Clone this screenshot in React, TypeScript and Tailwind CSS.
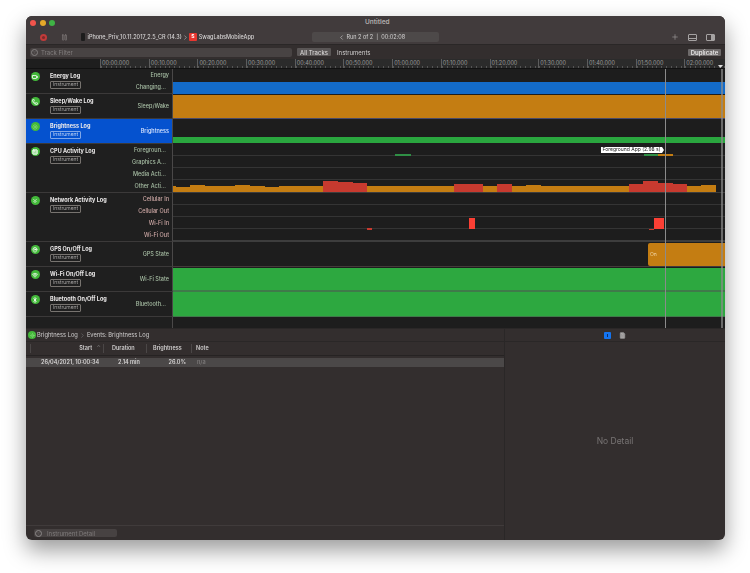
import { Battery, Phone, Sun, Cpu, ChevronsDown, MapPin, Wifi, Bluetooth, Plus, Pause, ChevronLeft, ChevronRight, Filter, FileText } from 'lucide-react'

const tracks = [
  { name: 'Energy Log', icon: Battery, labels: ['Energy', 'Changing...'], h: 'h-[25px]', tone: 'text-[#a8bfa5]' },
  { name: 'Sleep/Wake Log', icon: Phone, labels: ['Sleep/Wake'], h: 'h-[25px]', tone: 'text-[#a8bfa5]' },
  { name: 'Brightness Log', icon: Sun, labels: ['Brightness'], h: 'h-[25px]', tone: 'text-[#dbe6ff]', selected: true },
  { name: 'CPU Activity Log', icon: Cpu, labels: ['Foregroun...', 'Graphics A...', 'Media Acti...', 'Other Acti...'], h: 'h-[49px]', tone: 'text-[#a8bfa5]' },
  { name: 'Network Activity Log', icon: ChevronsDown, labels: ['Cellular In', 'Cellular Out', 'Wi-Fi In', 'Wi-Fi Out'], h: 'h-[49px]', tone: 'text-[#d0aaa7]' },
  { name: 'GPS On/Off Log', icon: MapPin, labels: ['GPS State'], h: 'h-[25px]', tone: 'text-[#a8bfa5]' },
  { name: 'Wi-Fi On/Off Log', icon: Wifi, labels: ['Wi-Fi State'], h: 'h-[25px]', tone: 'text-[#a8bfa5]' },
  { name: 'Bluetooth On/Off Log', icon: Bluetooth, labels: ['Bluetooth...'], h: 'h-[25px]', tone: 'text-[#a8bfa5]' },
]

const times = ['00:00.000', '00:10.000', '00:20.000', '00:30.000', '00:40.000', '00:50.000', '01:00.000', '01:10.000', '01:20.000', '01:30.000', '01:40.000', '01:50.000', '02:00.000']

// width and height in px, laid end to end from the chart's left edge (x=172)
const cpuBars = [
  { x: 0, w: 3, h: 6, c: '#c47d12' }, { x: 3, w: 14, h: 5, c: '#c47d12' }, { x: 17, w: 15, h: 7, c: '#c47d12' },
  { x: 32, w: 30, h: 6, c: '#c47d12' }, { x: 62, w: 15, h: 7, c: '#c47d12' }, { x: 77, w: 15, h: 6, c: '#c47d12' },
  { x: 92, w: 14, h: 5, c: '#c47d12' }, { x: 106, w: 43.5, h: 6, c: '#c47d12' },
  { x: 150, w: 15, h: 11, c: '#c73a2f' }, { x: 165, w: 15, h: 10, c: '#c73a2f' }, { x: 180, w: 14.5, h: 9, c: '#c73a2f' },
  { x: 194, w: 87, h: 6, c: '#c47d12' }, { x: 281, w: 29, h: 8, c: '#c73a2f' }, { x: 310, w: 14, h: 6, c: '#c47d12' },
  { x: 325, w: 15, h: 8, c: '#c73a2f' }, { x: 340, w: 14, h: 6, c: '#c47d12' }, { x: 354, w: 15, h: 7, c: '#c47d12' },
  { x: 369, w: 88, h: 6, c: '#c47d12' }, { x: 457, w: 14, h: 8, c: '#c73a2f' }, { x: 471, w: 15, h: 11, c: '#c73a2f' },
  { x: 486, w: 15, h: 9, c: '#c73a2f' }, { x: 501, w: 14, h: 8, c: '#c73a2f' }, { x: 515, w: 14, h: 6, c: '#c47d12' },
  { x: 529, w: 15, h: 7, c: '#c47d12' },
]

function Badge({ selected }: { selected?: boolean }) {
  return (
    <div className={`mt-[1px] flex h-[8px] w-[31px] items-center justify-center rounded-[1px] border text-[5px] leading-none ${selected ? 'border-[#7fa6e8] text-[#bcd2f5]' : 'border-[#77736f] text-[#a5a3a2]'}`}>
      Instrument
    </div>
  )
}

function TrackHeader({ track }: { track: (typeof tracks)[number] }) {
  const Icon = track.icon
  return (
    <div className={`${track.h} flex w-[147px] shrink-0 border-r border-b border-r-[#4a4848] border-b-[#3b3939] ${track.selected ? 'bg-[#0552cf]' : 'bg-[#1f1f1f]'}`}>
      <div className="w-[24px] shrink-0 pt-[3px] pl-[4.5px]">
        <div className="flex h-[9px] w-[9px] items-center justify-center rounded-full bg-[#43b93a]">
          <Icon size={6} strokeWidth={3} className={track.selected ? 'text-[#86d97a]' : 'text-white'} />
        </div>
      </div>
      <div className="w-[62px] shrink-0 pt-[3.5px]">
        <div className="text-[5.5px] leading-[7px] font-bold whitespace-nowrap text-[#eceaea]">{track.name}</div>
        <Badge selected={track.selected} />
      </div>
      <div className={`flex flex-1 flex-col items-end pr-[3px] text-[5.5px] font-medium whitespace-nowrap ${track.tone} ${track.labels.length === 1 ? 'justify-center' : 'justify-around'}`}>
        {track.labels.map((label) => (
          <span key={label} className={label.endsWith('...') ? 'mr-[3px]' : ''}>{label}</span>
        ))}
      </div>
    </div>
  )
}

function Lane() {
  return <div className="h-[12px] border-b border-[#343434]" />
}

function Chart() {
  return (
    <div className="relative flex-1 overflow-hidden bg-[#1d1d1d]">
      <div className="h-[25px] border-b border-[#343434] pt-[12.5px]">
        <div className="h-[12px] bg-[#136bc9]" />
      </div>
      <div className="h-[25px] border-b border-[#4a4a68] pt-[1px]">
        <div className="h-[23px] bg-[#c47d12]" />
      </div>
      <div className="h-[25px] pt-[18px]">
        <div className="h-[6px] bg-[#2aa63f]" />
      </div>

      <div className="relative h-[49px] border-b border-[#3d3d3d]">
        <Lane />
        <Lane />
        <Lane />
        <div className="absolute top-[10px] left-[222px] h-[1.5px] w-[16px] bg-[#2f8f45]" />
        <div className="absolute top-[10px] left-[471px] h-[1.5px] w-[15px] bg-[#2f8f45]" />
        <div className="absolute top-[10px] left-[485px] h-[2px] w-[15px] bg-[#c47d12]" />
        <div className="absolute top-[3px] left-[428px] flex h-[6px] w-[61px] items-center justify-center bg-white text-[5px] whitespace-nowrap text-[#222]">
          Foreground App (2.98 s)
        </div>
        <div className="absolute top-[3px] left-[489px] h-[6px] w-[2px] bg-white [clip-path:polygon(0_0,100%_50%,0_100%)]" />
        <div className="absolute right-0 bottom-0 left-0 flex items-end">
          {cpuBars.map((bar) => (
            <div key={bar.x} style={{ width: bar.w, height: bar.h, backgroundColor: bar.c }} />
          ))}
        </div>
      </div>

      <div className="relative h-[49px] border-b-2 border-[#3d3d3d]">
        <Lane />
        <Lane />
        <Lane />
        <div className="absolute top-[25px] left-[296px] h-[11px] w-[6px] bg-[#fb3f34]" />
        <div className="absolute top-[25px] left-[481px] h-[11px] w-[10px] bg-[#fb3f34]" />
        <div className="absolute top-[35px] left-[194px] h-[2px] w-[5px] bg-[#c73a2f]" />
        <div className="absolute top-[36px] left-[476px] h-[1px] w-[5px] bg-[#c73a2f]" />
      </div>

      <div className="flex h-[25px] justify-end border-b border-[#443a3a] pt-[1px]">
        <div className="h-[23px] w-[77px] rounded-l-[2px] bg-[#c47d12] pt-[8px] pl-[2px] text-[5px] leading-[7px] text-[#f3d8a8]">On</div>
      </div>
      <div className="h-[25px] border-b-2 border-[#3f7a4a] pt-[1px]">
        <div className="h-[22px] bg-[#2da840]" />
      </div>
      <div className="h-[25px] border-b border-[#3f7a4a]">
        <div className="h-[24px] bg-[#2da840]" />
      </div>

      <div className="absolute top-0 bottom-0 left-[492px] w-[1px] bg-[#8b8b8b]" />
      <div className="absolute top-0 bottom-0 left-[548px] w-[2px] bg-[#8b8b8b]/70" />
    </div>
  )
}

export default function App() {
  return (
    <div className="h-[573px] w-[750px] overflow-hidden bg-white pt-[16px] pl-[26px] font-['Inter','Liberation_Sans',sans-serif]">
      <div className="flex h-[524px] w-[699px] flex-col overflow-hidden rounded-[6px] bg-[#332e2e] shadow-[0_10px_22px_rgba(0,0,0,0.4)] blur-[0.3px]">
        {/* title bar */}
        <div className="h-[29px] shrink-0 border-b border-[#2a2727] bg-[#413b3c]">
          <div className="flex h-[14px] items-center gap-[3.5px] pl-[4px]">
            <span className="h-[6px] w-[6px] rounded-full bg-[#f2544c]" />
            <span className="h-[6px] w-[6px] rounded-full bg-[#e5a929]" />
            <span className="h-[6px] w-[6px] rounded-full bg-[#3fb345]" />
            <span className="flex-1 pr-[29px] text-center text-[6.5px] font-semibold text-[#b0acac]">Untitled</span>
          </div>
          <div className="flex h-[14px] items-center pr-[10px] text-[5.5px] text-[#d4d2d2]">
            <div className="ml-[14px] flex h-[7px] w-[7px] shrink-0 items-center justify-center rounded-full bg-[#c23b3a]">
              <span className="h-[3px] w-[3px] rounded-full bg-[#7a2b2b]" />
            </div>
            <Pause size={7} className="ml-[14px] shrink-0 text-[#8b8786]" />
            <div className="ml-[12.5px] h-[8px] w-[4px] shrink-0 rounded-[1px] bg-[#1c1c1c]" />
            <span className="ml-[3px] font-medium whitespace-nowrap">iPhone_Priv_10.11.2017_2.5_CR (14.3)</span>
            <ChevronRight size={7} className="shrink-0 text-[#c4c2c2]" />
            <div className="flex h-[8px] w-[8px] shrink-0 items-center justify-center rounded-[1px] bg-[#e8362f] text-[5px] font-bold text-white">S</div>
            <span className="ml-[2px] font-medium">SwagLabsMobileApp</span>
            <div className="ml-[58px] flex h-[10px] w-[127px] shrink-0 items-center justify-center gap-[1px] rounded-[2px] bg-[#4d4949] pr-[9px]">
              <ChevronLeft size={7} />
              <span className="ml-[1px] whitespace-nowrap">Run 2 of 2 &nbsp;|&nbsp; 00:02:08</span>
            </div>
            <Plus size={8} className="ml-auto shrink-0 text-[#9c9898]" />
            <div className="ml-[9px] h-[7px] w-[9px] shrink-0 rounded-[1px] border border-[#a5a2a2] pt-[3px]">
              <div className="h-[1px] bg-[#a5a2a2]" />
            </div>
            <div className="ml-[9px] flex h-[7px] w-[9px] shrink-0 justify-end rounded-[1px] border border-[#a5a2a2]">
              <div className="w-[3px] bg-[#a5a2a2]" />
            </div>
          </div>
        </div>

        {/* filter bar */}
        <div className="flex h-[14px] shrink-0 items-center bg-[#332e2e] text-[6px]">
          <div className="ml-[4px] flex h-[9px] w-[262px] items-center rounded-[2px] bg-[#484343] pl-[1px] text-[#837f7f]">
            <div className="flex h-[7px] w-[7px] items-center justify-center rounded-full border border-[#837f7f]">
              <Filter size={3} />
            </div>
            <span className="ml-[3px]">Track Filter</span>
          </div>
          <div className="ml-[5px] flex h-[8px] w-[34px] items-center justify-center rounded-[1px] bg-[#5a5656] text-[#e2e0e0]">All Tracks</div>
          <span className="ml-[6px] text-[#cfcdcd]">Instruments</span>
          <div className="mr-[4px] ml-auto flex h-[7px] w-[33px] items-center justify-center rounded-[1px] bg-[#6e6a6a] font-semibold text-[#e6e4e4]">Duplicate</div>
        </div>

        {/* ruler */}
        <div className="relative flex h-[10px] shrink-0 border-b border-[#111] bg-[#2b2b2b]">
          <div className="w-[74px] shrink-0 bg-[#1e1e1e]" />
          {times.map((t) => (
            <div key={t} className="flex w-[48.7px] shrink-0 flex-col justify-between border-l border-[#5d5d5d] text-[5.5px] leading-[6px] text-[#9a9a9a]">
              <span className="pt-[1px] pl-[1px]">{t}</span>
              <div className="h-[2px] bg-[repeating-linear-gradient(90deg,#555_0,#555_1px,transparent_1px,transparent_4.87px)]" />
            </div>
          ))}
          <div className="absolute right-[2px] bottom-0 h-[3px] w-[5px] bg-[#dddddd] [clip-path:polygon(0_0,100%_0,50%_100%)]" />
        </div>

        {/* tracks */}
        <div className="flex h-[259px] shrink-0 bg-[#1f1f1f]">
          <div className="flex w-[147px] shrink-0 flex-col">
            {tracks.map((track) => (
              <TrackHeader key={track.name} track={track} />
            ))}
            <div className="flex-1 border-r border-[#4a4848]" />
          </div>
          <Chart />
        </div>

        {/* detail area */}
        <div className="flex flex-1 border-t border-[#2a2727]">
          <div className="flex w-[479px] shrink-0 flex-col border-r border-[#2a2727]">
            <div className="flex h-[13px] shrink-0 items-center border-b border-[#2a2727] pl-[2px] text-[5.75px] text-[#cfcdcd]">
              <span className="flex h-[8px] w-[8px] items-center justify-center rounded-full bg-[#43b93a]">
                <Sun size={5} strokeWidth={3} className="text-[#86d97a]" />
              </span>
              <span className="ml-[1px]">Brightness Log</span>
              <ChevronRight size={7} className="mx-[1px] text-[#777]" />
              <span>Events: Brightness Log</span>
            </div>
            <div className="flex h-[14px] shrink-0 items-center border-b border-[#262323] pl-[4px] text-[5.5px] font-semibold text-[#cfcdcd]">
              <div className="w-[73px] border-l border-[#4b4747] pr-[2px] text-right">Start <span className="ml-[3px] text-[#777]">⌃</span></div>
              <div className="w-[43px] border-l border-[#4b4747] pl-[8px]">Duration</div>
              <div className="w-[45px] border-l border-[#4b4747] pl-[6px]">Brightness</div>
              <div className="border-l border-[#4b4747] pl-[4px]">Note</div>
            </div>
            <div className="mt-[2px] flex h-[9px] shrink-0 items-center bg-[#4b4848] text-[5.5px] font-semibold text-[#d8d6d6]">
              <div className="w-[92px] pl-[15px] whitespace-nowrap">26/04/2021, 10:00:34</div>
              <div className="w-[40px] whitespace-nowrap">2.14 min</div>
              <div className="w-[28px] text-right">26.0%</div>
              <div className="pl-[11px] text-[#7d7a7a]">n/a</div>
            </div>
            <div className="flex-1" />
            <div className="flex h-[15px] shrink-0 items-center border-t border-[#403b3b] pl-[8px]">
              <div className="flex h-[8px] w-[83px] items-center rounded-[2px] bg-[#474242] pl-[1px] text-[6px] text-[#7f7b7b]">
                <div className="flex h-[7px] w-[7px] items-center justify-center rounded-full border border-[#8b8787]">
                  <Filter size={3} />
                </div>
                <span className="ml-[5px]">Instrument Detail</span>
              </div>
            </div>
          </div>
          <div className="flex flex-1 flex-col">
            <div className="flex h-[13px] shrink-0 items-center justify-center gap-[8px] border-b border-[#2a2727]">
              <div className="flex h-[7px] w-[7px] items-center justify-center rounded-[1px] bg-[#1474f0]">
                <div className="h-[3px] w-[1px] bg-[#0b2b66]" />
              </div>
              <FileText size={7} className="fill-[#b0adad] text-[#888]" />
            </div>
            <div className="flex flex-1 items-center justify-center text-[8.5px] text-[#787474]">No Detail</div>
          </div>
        </div>
      </div>
    </div>
  )
}
